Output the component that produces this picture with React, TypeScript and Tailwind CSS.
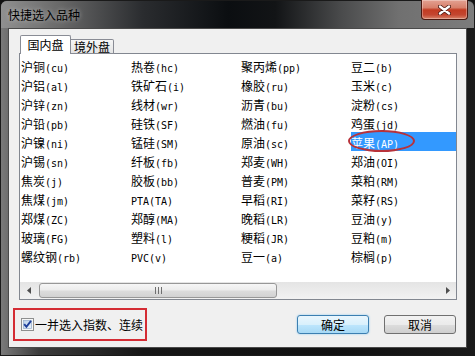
import React from "react";

const columns: string[][] = [
  ["沪铜(cu)", "沪铝(al)", "沪锌(zn)", "沪铅(pb)", "沪镍(ni)", "沪锡(sn)", "焦炭(j)", "焦煤(jm)", "郑煤(ZC)", "玻璃(FG)", "螺纹钢(rb)"],
  ["热卷(hc)", "铁矿石(i)", "线材(wr)", "硅铁(SF)", "锰硅(SM)", "纤板(fb)", "胶板(bb)", "PTA(TA)", "郑醇(MA)", "塑料(l)", "PVC(v)"],
  ["聚丙烯(pp)", "橡胶(ru)", "沥青(bu)", "燃油(fu)", "原油(sc)", "郑麦(WH)", "普麦(PM)", "早稻(RI)", "晚稻(LR)", "粳稻(JR)", "豆一(a)"],
  ["豆二(b)", "玉米(c)", "淀粉(cs)", "鸡蛋(jd)", "苹果(AP)", "郑油(OI)", "菜粕(RM)", "菜籽(RS)", "豆油(y)", "豆粕(m)", "棕榈(p)"],
];

const SELECTED = "苹果(AP)";

// split CJK from half-width chars so latin gets a 6px monospace cell
function Label({ text }: { text: string }) {
  const parts = text.split(/([\u3000-\u9fff]+)/).filter(Boolean);
  return (
    <>
      {parts.map((p, i) =>
        /[\u3000-\u9fff]/.test(p) ? (
          <span key={i} className="text-[12px]">
            {p}
          </span>
        ) : (
          <span key={i} className="font-['DejaVu_Sans_Mono',monospace] text-[10px]">
            {p}
          </span>
        )
      )}
    </>
  );
}

function TitleBar() {
  return (
    <div className="flex h-[27px] shrink-0 items-start justify-between rounded-t-[6px] bg-[linear-gradient(to_right,#909090_0%,#6a6a6a_12%,#2a2c2f_30%,#0b0e11_48%,#121416_58%,#4a4b4c_72%,#707070_84%,#7c7c7c_100%)]">
      <div className="pl-[7px] pt-[7px] text-[12px] leading-[14px] text-black [text-shadow:0_0_5px_rgba(255,255,255,0.55)]">
        快捷选入品种
      </div>
      <div className="-mt-px mr-[6px] flex h-[20px] w-[47px] items-center justify-center rounded-b-[4px] border border-t-0 border-[#4a1810] bg-[linear-gradient(to_bottom,#e3a192_0%,#d7806b_40%,#c23b22_52%,#c44630_78%,#d8846a_100%)] shadow-[inset_0_0_0_1px_rgba(255,255,255,0.3)]">
        <svg width="13" height="10" viewBox="0 0 13 10">
          <path d="M2 1.5 L11 8.5 M11 1.5 L2 8.5" stroke="#4a1a12" strokeWidth="4" strokeLinecap="round" />
          <path d="M2 1.5 L11 8.5 M11 1.5 L2 8.5" stroke="#ffffff" strokeWidth="2.4" strokeLinecap="round" />
        </svg>
      </div>
    </div>
  );
}

function Tabs() {
  return (
    <div className="relative z-10 flex h-[19px] items-end text-black">
      <div className="ml-px h-[19px] w-[51px] rounded-t-[2px] border border-b-0 border-[#898c95] bg-white text-center text-[12px] leading-[18px]">
        国内盘
      </div>
      <div className="h-[15px] w-[43px] rounded-tr-[2px] border border-l-0 border-[#898c95] bg-[linear-gradient(to_bottom,#f6f6f6,#e4e4e4)] text-center text-[12px] leading-[14px]">
        境外盘
      </div>
    </div>
  );
}

function ScrollBar() {
  return (
    <div className="flex h-[17px] shrink-0 bg-[linear-gradient(to_bottom,#e4e4e4,#f2f2f2)]">
      <div className="flex w-[17px] items-center justify-center">
        <svg width="4" height="7" viewBox="0 0 4 7">
          <polygon points="4,0 0,3.5 4,7" fill="#4e4e4e" />
        </svg>
      </div>
      <div className="my-px ml-[2px] flex w-[238px] items-center justify-center gap-[2px] rounded-[3px] border border-[#979797] bg-[linear-gradient(to_bottom,#f6f6f6_0%,#ececec_45%,#dcdcdc_55%,#d2d2d2_100%)]">
        <div className="h-[7px] w-px bg-[#6f6f6f]" />
        <div className="h-[7px] w-px bg-[#6f6f6f]" />
        <div className="h-[7px] w-px bg-[#6f6f6f]" />
      </div>
      <div className="flex-1" />
      <div className="flex w-[17px] items-center justify-center">
        <svg width="4" height="7" viewBox="0 0 4 7">
          <polygon points="0,0 4,3.5 0,7" fill="#4e4e4e" />
        </svg>
      </div>
    </div>
  );
}

function Checkbox() {
  return (
    <svg width="13" height="13" viewBox="0 0 13 13">
      <defs>
        <linearGradient id="cb" x1="0" y1="0" x2="1" y2="1">
          <stop offset="0" stopColor="#b9cfe9" />
          <stop offset="1" stopColor="#eef4fb" />
        </linearGradient>
      </defs>
      <rect x="0.5" y="0.5" width="12" height="12" fill="#f6f6f6" stroke="#8e8f8f" />
      <rect x="2.5" y="2.5" width="8" height="8" fill="url(#cb)" stroke="#9fb4cf" strokeWidth="0.8" />
      <path d="M3.2 6.2 L5.4 8.8 L10 2.8" fill="none" stroke="#1f3f9a" strokeWidth="1.9" />
    </svg>
  );
}

export default function App() {
  return (
    <div className="h-[356px] w-[475px] overflow-hidden bg-[#111]">
      <div className="flex h-full flex-col rounded-t-[7px] border border-[#1a1a1a] bg-[linear-gradient(to_right,#7a7a7a_0%,#3c3c3c_8%,#161616_30%,#101010_70%,#1a1a1a_100%)] font-['Noto_Sans_CJK_SC',sans-serif]">
        <TitleBar />
        <div className="mx-[7px] flex h-[320px] flex-col border border-[#4a4a4a] bg-[#f0f0f0] pl-[10px] pr-[9px] pt-[6px]">
          <Tabs />
          <div className="-mt-px flex h-[247px] flex-col border border-[#828790] bg-white">
            <div className="flex flex-1 overflow-hidden pl-px pt-[2px]">
              {columns.map((col, ci) => (
                <div key={ci} className="flex w-[110px] shrink-0 flex-col">
                  {col.map((name) =>
                    name === SELECTED ? (
                      <div key={name} className="relative h-[19px] whitespace-nowrap bg-[#3399ff] leading-[19px] text-white">
                        <Label text={name} />
                        <div className="absolute left-[-3px] top-[-2px] h-[22px] w-[67px] rounded-[50%] border-2 border-[#b8323a]" />
                      </div>
                    ) : (
                      <div key={name} className="h-[19px] whitespace-nowrap leading-[19px] text-black">
                        <Label text={name} />
                      </div>
                    )
                  )}
                </div>
              ))}
            </div>
            <ScrollBar />
          </div>
          <div className="-ml-[6px] mt-[8px] flex h-[33px] items-center justify-between">
            <div className="flex h-[33px] w-[134px] items-center gap-px border-2 border-[#d42c34] pl-[6px]">
              <Checkbox />
              <span className="text-[12px] leading-[14px] text-black">一并选入指数、连续</span>
            </div>
            <div className="mr-px flex gap-[15px]">
              <button className="h-[19px] w-[72px] rounded-[3px] border border-[#3c7fb1] bg-[linear-gradient(to_bottom,#eaf6fd_0%,#d9f0fc_50%,#bee6fd_51%,#a7d9f5_100%)] text-[12px] leading-[17px] text-black shadow-[0_0_2px_#7fc4ef]">
                确定
              </button>
              <button className="h-[19px] w-[72px] rounded-[3px] border border-[#707070] bg-[linear-gradient(to_bottom,#f2f2f2_0%,#ebebeb_50%,#dddddd_51%,#cfcfcf_100%)] text-[12px] leading-[17px] text-black">
                取消
              </button>
            </div>
          </div>
        </div>
      </div>
    </div>
  );
}
